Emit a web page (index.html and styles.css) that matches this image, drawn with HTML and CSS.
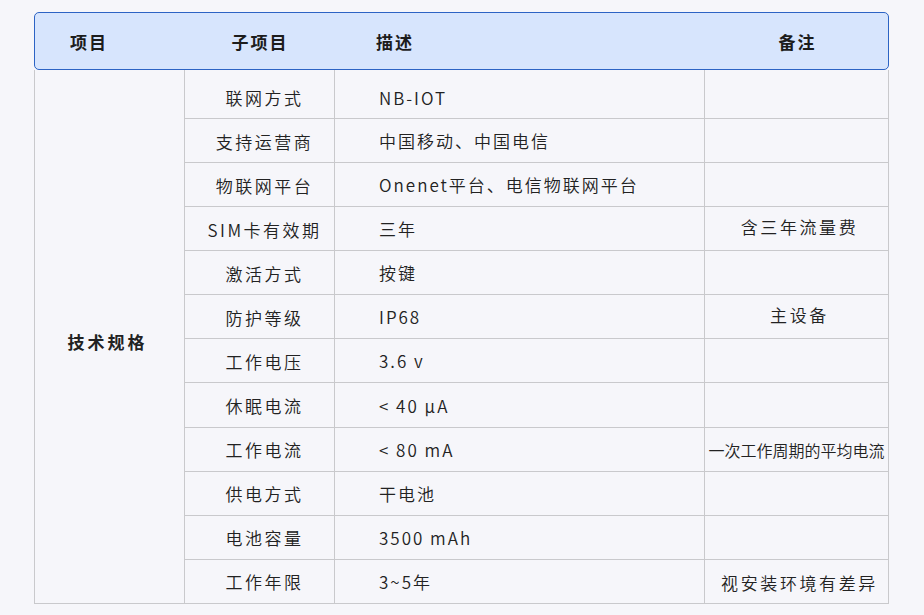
FILE: index.html
```html
<!DOCTYPE html>
<html lang="zh-CN">
<head>
<meta charset="utf-8">
<title>技术规格</title>
<link rel="stylesheet" href="styles.css">
</head>
<body>
<div class="page">
  <div class="spec">
    <div class="thead">
      <div class="th th-item">项目</div>
      <div class="th th-sub">子项目</div>
      <div class="th th-desc">描述</div>
      <div class="th th-note">备注</div>
    </div>
    <div class="tbody">
      <div class="cell group">技术规格</div>

      <div class="cell sub first">联网方式</div>
      <div class="cell desc first">NB-IOT</div>
      <div class="cell note first"></div>

      <div class="cell sub">支持运营商</div>
      <div class="cell desc">中国移动、中国电信</div>
      <div class="cell note"></div>

      <div class="cell sub">物联网平台</div>
      <div class="cell desc">Onenet平台、电信物联网平台</div>
      <div class="cell note"></div>

      <div class="cell sub">SIM卡有效期</div>
      <div class="cell desc">三年</div>
      <div class="cell note">含三年流量费</div>

      <div class="cell sub">激活方式</div>
      <div class="cell desc">按键</div>
      <div class="cell note"></div>

      <div class="cell sub">防护等级</div>
      <div class="cell desc">IP68</div>
      <div class="cell note">主设备</div>

      <div class="cell sub">工作电压</div>
      <div class="cell desc">3.6 v</div>
      <div class="cell note"></div>

      <div class="cell sub">休眠电流</div>
      <div class="cell desc">&lt; 40 μA</div>
      <div class="cell note"></div>

      <div class="cell sub">工作电流</div>
      <div class="cell desc">&lt; 80 mA</div>
      <div class="cell note tight">一次工作周期的平均电流</div>

      <div class="cell sub">供电方式</div>
      <div class="cell desc">干电池</div>
      <div class="cell note"></div>

      <div class="cell sub">电池容量</div>
      <div class="cell desc">3500 mAh</div>
      <div class="cell note"></div>

      <div class="cell sub">工作年限</div>
      <div class="cell desc">3~5年</div>
      <div class="cell note last">视安装环境有差异</div>
    </div>
  </div>
</div>
</body>
</html>
```
FILE: styles.css
```css
html, body {
  margin: 0;
  padding: 0;
  background: #f6f6fa;
}

body {
  font-family: "Noto Sans CJK SC", "Noto Sans", sans-serif;
  color: #222;
}

.page {
  padding: 12px 0 0 34px;
}

.spec {
  width: 855px;
}

.thead {
  box-sizing: border-box;
  height: 58px;
  display: grid;
  grid-template-columns: 150px 150px 370px 1fr;
  align-items: center;
  background: #d7e5fd;
  border: 1px solid #2c63c4;
  border-radius: 5px;
}

.th {
  font-size: 17px;
  font-weight: 700;
  letter-spacing: 2px;
  color: #1c1c1c;
  padding-top: 1px;
}

.th-item {
  padding-left: 35px;
}

.th-sub {
  text-align: center;
}

.th-desc {
  padding-left: 41px;
}

.th-note {
  text-align: center;
  padding-left: 2px;
}

.tbody {
  display: grid;
  grid-template-columns: 150px 150px 370px 184px;
  grid-template-rows: 49px repeat(11, 44.09px);
  border-left: 1px solid #c9c9cc;
}

.cell {
  box-sizing: border-box;
  border-right: 1px solid #c9c9cc;
  border-bottom: 1px solid #c9c9cc;
  display: flex;
  align-items: center;
  font-size: 17px;
  font-weight: 350;
  letter-spacing: 2px;
  color: #222;
}

.group {
  grid-row: 1 / span 12;
  justify-content: center;
  font-weight: 700;
  letter-spacing: 3px;
  padding-top: 10px;
  padding-right: 4px;
}

.sub {
  justify-content: center;
  letter-spacing: 2.5px;
  padding-top: 1px;
  padding-left: 10px;
}

.desc {
  padding-left: 44px;
  padding-top: 0;
}

.note {
  justify-content: center;
  letter-spacing: 2.6px;
  padding-left: 6px;
  padding-bottom: 4px;
}

.first {
  padding-top: 6px;
}

.note.first {
  padding-bottom: 0;
}

.note.last {
  padding-bottom: 0;
  padding-top: 2px;
}

.tight {
  font-size: 16px;
  letter-spacing: 0;
  padding-left: 0;
  padding-bottom: 0;
  padding-top: 2px;
}
```
